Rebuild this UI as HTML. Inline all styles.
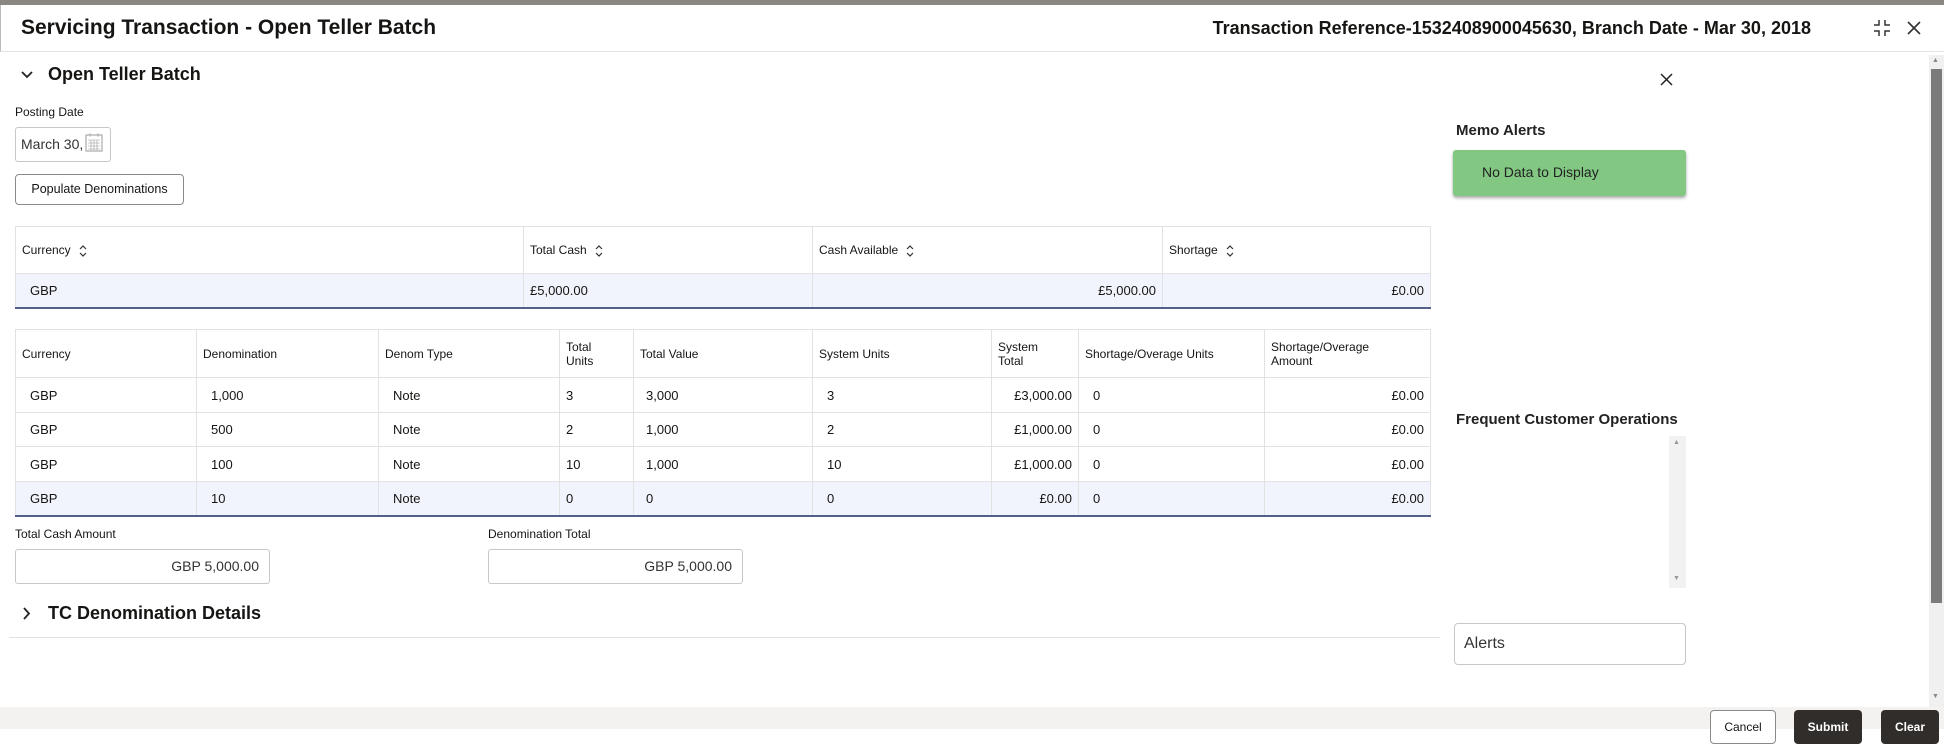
<!DOCTYPE html>
<html><head><meta charset="utf-8">
<style>
*{box-sizing:border-box;margin:0;padding:0}
body{width:1944px;height:744px;overflow:hidden;background:#fff;font-family:"Liberation Sans",sans-serif;color:#161513;position:relative}
.a{position:absolute;white-space:nowrap}
.t{position:absolute;border-collapse:collapse;font-size:13px}
.t td{border:1px solid #e2e2e2;padding:0 6px;vertical-align:middle}
.hd td{font-size:12px;color:#161513}
.sel td{background:#f1f4fc;border-top:1px solid #55608a;border-bottom:2px solid #55608a}
.sel td{border-left:1px solid #55608a}
.r{text-align:right}
.inp{position:absolute;border:1px solid #c8c8c8;border-radius:3px;background:#fff}
.btn{position:absolute;border-radius:4px;font-size:12px;font-weight:bold;text-align:center}
.so{display:inline-block;vertical-align:middle;margin-left:8px}
</style></head><body>
<div class="a" style="left:0;top:0;width:1944px;height:5px;background:#8a8680"></div>
<div class="a" style="left:0;top:5px;width:1944px;height:47px;border-bottom:1px solid #e4e4e4;border-left:1px solid #bbb"></div>
<div class="a" style="left:21px;top:16px;font-size:21px;font-weight:bold">Servicing Transaction - Open Teller Batch</div>
<div class="a" style="right:133px;top:18px;font-size:18px;font-weight:bold">Transaction Reference-1532408900045630, Branch Date - Mar 30, 2018</div>
<svg class="a" style="left:1873px;top:19px" width="18" height="18" viewBox="0 0 18 18" stroke="#333" stroke-width="1.5" fill="none"><path d="M6 1v5H1M12 1v5h5M6 17v-5H1M12 17v-5h5"/></svg>
<svg class="a" style="left:1907px;top:21px" width="14" height="14" viewBox="0 0 14 14" stroke="#333" stroke-width="1.6"><path d="M1 1l12 12M13 1L1 13"/></svg>
<div class="a" style="left:1929px;top:55px;width:15px;height:652px;background:#f0f0f0"></div>
<div class="a" style="left:1931px;top:69px;width:11px;height:534px;background:#7b7b7b"></div>
<div class="a" style="left:1932px;top:57px;font-size:7px;color:#888">▲</div>
<div class="a" style="left:1932px;top:693px;font-size:7px;color:#888">▼</div>

<svg class="a" style="left:21px;top:70px" width="12" height="10" viewBox="0 0 12 10" stroke="#222" stroke-width="1.8" fill="none"><path d="M1 2l5 5 5-5"/></svg>
<div class="a" style="left:48px;top:64px;font-size:18px;font-weight:bold">Open Teller Batch</div>
<svg class="a" style="left:1660px;top:73px" width="13" height="13" viewBox="0 0 13 13" stroke="#222" stroke-width="1.5"><path d="M1 1l11 11M12 1L1 12"/></svg>

<div class="a" style="left:15px;top:105px;font-size:12px">Posting Date</div>
<div class="inp" style="left:15px;top:127px;width:96px;height:35px"></div>
<div class="a" style="left:21px;top:136px;font-size:14px;color:#333">March 30,</div>
<svg class="a" style="left:85px;top:132px" width="18" height="20" viewBox="0 0 18 20" fill="none" stroke="#999"><rect x="1" y="3" width="16" height="16"/><path d="M5 1v4M13 1v4M3 8h12M3 11h12M3 14h12M3 17h12M6 8v10M9 8v10M12 8v10" stroke-width=".6"/></svg>
<div class="btn" style="left:15px;top:174px;width:169px;height:31px;border:1px solid #8a8a8a;font-weight:normal;line-height:29px;font-size:12.5px">Populate Denominations</div>

<table class="t" style="left:15px;top:226px;width:1416px">
<tr class="hd" style="height:47px"><td style="width:508px">Currency<svg class="so" width="8" height="12" viewBox="0 0 8 12" fill="none" stroke="#333" stroke-width="1.2"><path d="M1 4l3-3 3 3M1 8l3 3 3-3"/></svg></td><td style="width:289px">Total Cash<svg class="so" width="8" height="12" viewBox="0 0 8 12" fill="none" stroke="#333" stroke-width="1.2"><path d="M1 4l3-3 3 3M1 8l3 3 3-3"/></svg></td><td style="width:350px">Cash Available<svg class="so" width="8" height="12" viewBox="0 0 8 12" fill="none" stroke="#333" stroke-width="1.2"><path d="M1 4l3-3 3 3M1 8l3 3 3-3"/></svg></td><td>Shortage<svg class="so" width="8" height="12" viewBox="0 0 8 12" fill="none" stroke="#333" stroke-width="1.2"><path d="M1 4l3-3 3 3M1 8l3 3 3-3"/></svg></td></tr>
<tr class="sel" style="height:34px"><td style="padding-left:14px;border-left:1px solid #e2e2e2">GBP</td><td>£5,000.00</td><td class="r">£5,000.00</td><td class="r">£0.00</td></tr>
</table>

<table class="t" style="left:15px;top:329px;width:1416px">
<tr class="hd" style="height:48px"><td style="width:181px">Currency</td><td style="width:182px">Denomination</td><td style="width:181px">Denom Type</td><td style="width:74px">Total<br>Units</td><td style="width:179px">Total Value</td><td style="width:179px">System Units</td><td style="width:87px">System<br>Total</td><td style="width:186px">Shortage/Overage Units</td><td>Shortage/Overage<br>Amount</td></tr>
<tr style="height:35px"><td style="padding-left:14px">GBP</td><td style="padding-left:14px">1,000</td><td style="padding-left:14px">Note</td><td>3</td><td style="padding-left:12px">3,000</td><td style="padding-left:14px">3</td><td class="r">£3,000.00</td><td style="padding-left:14px">0</td><td class="r">£0.00</td></tr>
<tr style="height:34px"><td style="padding-left:14px">GBP</td><td style="padding-left:14px">500</td><td style="padding-left:14px">Note</td><td>2</td><td style="padding-left:12px">1,000</td><td style="padding-left:14px">2</td><td class="r">£1,000.00</td><td style="padding-left:14px">0</td><td class="r">£0.00</td></tr>
<tr style="height:35px"><td style="padding-left:14px">GBP</td><td style="padding-left:14px">100</td><td style="padding-left:14px">Note</td><td>10</td><td style="padding-left:12px">1,000</td><td style="padding-left:14px">10</td><td class="r">£1,000.00</td><td style="padding-left:14px">0</td><td class="r">£0.00</td></tr>
<tr class="sel" style="height:34px"><td style="padding-left:14px;border-left:1px solid #e2e2e2">GBP</td><td style="padding-left:14px">10</td><td style="padding-left:14px">Note</td><td>0</td><td style="padding-left:12px">0</td><td style="padding-left:14px">0</td><td class="r">£0.00</td><td style="padding-left:14px">0</td><td class="r">£0.00</td></tr>
</table>

<div class="a" style="left:15px;top:527px;font-size:12px">Total Cash Amount</div>
<div class="inp" style="left:15px;top:549px;width:255px;height:35px"></div>
<div class="a" style="left:15px;top:558px;width:244px;text-align:right;font-size:14px;color:#333">GBP 5,000.00</div>
<div class="a" style="left:488px;top:527px;font-size:12px">Denomination Total</div>
<div class="inp" style="left:488px;top:549px;width:255px;height:35px"></div>
<div class="a" style="left:488px;top:558px;width:244px;text-align:right;font-size:14px;color:#333">GBP 5,000.00</div>

<svg class="a" style="left:22px;top:607px" width="10" height="13" viewBox="0 0 10 13" stroke="#222" stroke-width="1.8" fill="none"><path d="M2 1l5 5.5L2 12"/></svg>
<div class="a" style="left:48px;top:603px;font-size:18px;font-weight:bold">TC Denomination Details</div>
<div class="a" style="left:9px;top:637px;width:1431px;height:1px;background:#e2e2e2"></div>

<div class="a" style="left:1456px;top:122px;font-size:15px;font-weight:bold;color:#222">Memo Alerts</div>
<div class="a" style="left:1453px;top:150px;width:233px;height:46px;background:#82c882;border-radius:3px;box-shadow:0 2px 3px rgba(0,0,0,.35)"></div>
<div class="a" style="left:1482px;top:164px;font-size:14px;color:#222">No Data to Display</div>
<div class="a" style="left:1456px;top:411px;font-size:15px;font-weight:bold;color:#222">Frequent Customer Operations</div>
<div class="a" style="left:1669px;top:436px;width:17px;height:152px;background:#f2f2f2"></div>
<div class="a" style="left:1673px;top:439px;font-size:7px;color:#999">▲</div>
<div class="a" style="left:1673px;top:575px;font-size:7px;color:#999">▼</div>
<div class="inp" style="left:1454px;top:623px;width:232px;height:42px;border-radius:4px"></div>
<div class="a" style="left:1464px;top:635px;font-size:16px;color:#333">Alerts</div>

<div class="a" style="left:0;top:707px;width:1944px;height:22px;background:#f3f2f1"></div>
<div class="btn" style="left:1710px;top:710px;width:66px;height:34px;border:1px solid #8a8a8a;background:#fff;font-weight:normal;line-height:32px">Cancel</div>
<div class="btn" style="left:1794px;top:710px;width:68px;height:34px;background:#312d2a;color:#fff;line-height:34px">Submit</div>
<div class="btn" style="left:1881px;top:710px;width:58px;height:34px;background:#312d2a;color:#fff;line-height:34px">Clear</div>
</body></html>
